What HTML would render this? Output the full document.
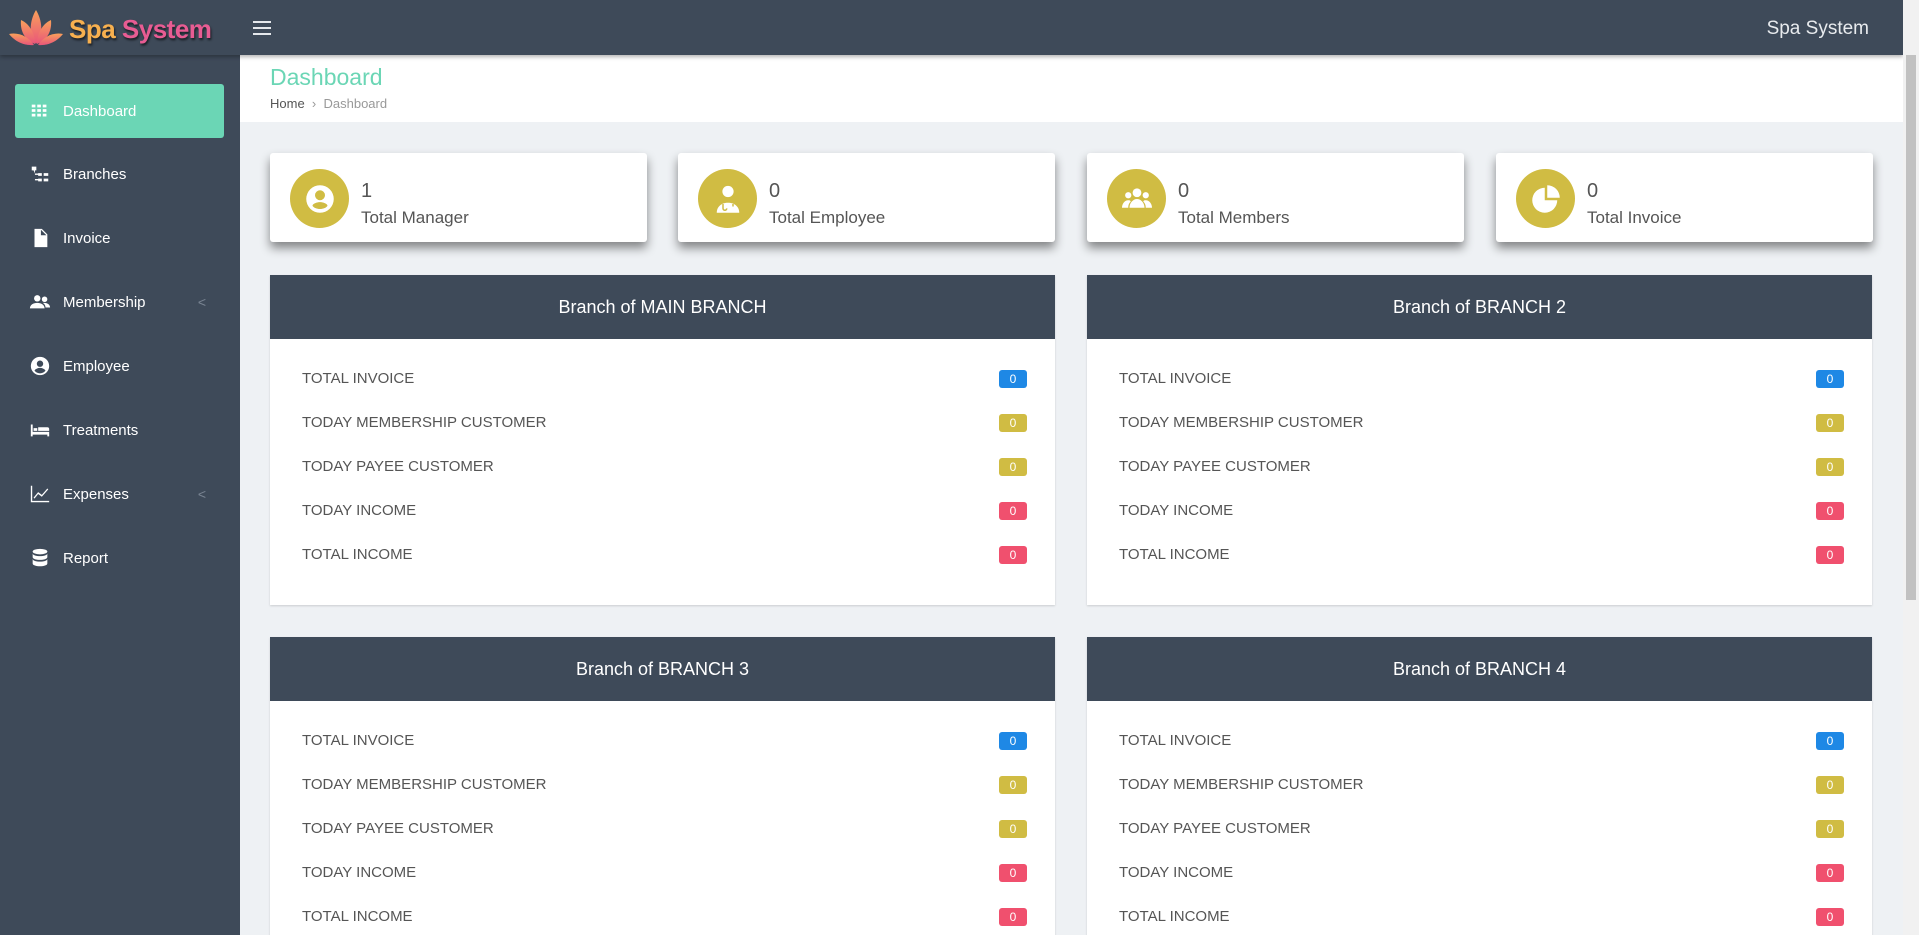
<!DOCTYPE html>
<html style="width:1919px;height:935px;overflow:hidden"><head><meta charset="utf-8"><style>
*{box-sizing:border-box;margin:0;padding:0}
body{width:1919px;height:935px;overflow:hidden;background:#eef1f4;font-family:"Liberation Sans",sans-serif;position:relative}
.top{position:absolute;left:0;top:0;width:1903px;height:55px;background:#3e4a59;box-shadow:0 2px 4px rgba(0,0,0,.3);z-index:3}
.logo{position:absolute;left:8px;top:8px}
.brand{position:absolute;left:69px;top:14px;font-size:26px;font-weight:bold;letter-spacing:-.5px;text-shadow:1px 2px 2px rgba(0,0,0,.6)}
.ham{position:absolute;left:253px;top:21px;width:18px}
.ham i{display:block;height:2px;background:#e5e8ec;margin-bottom:4px}
.tr{position:absolute;right:34px;top:18px;color:#e8ebee;font-size:19px}
.side{position:absolute;left:0;top:55px;width:240px;height:880px;background:#3e4a59}
.item{position:absolute;left:15px;width:209px;height:54px;color:#fff;font-size:15px;display:flex;align-items:center;padding-left:14px}
.item.act{background:#6bd6b5;border-radius:3px}
.item svg{width:22px;height:22px;margin-right:12px;fill:#fff}
.chev{position:absolute;right:18px;color:#7a8593;font-size:14px}
.hdr{position:absolute;left:240px;top:55px;width:1663px;height:67px;background:#fff}
.hdr h1{position:absolute;left:30px;top:9px;font-weight:normal;color:#6bd6b5;font-size:23px}
.bc{position:absolute;left:30px;top:41px;font-size:13px;color:#555}
.bc span{color:#999}
.scroll{position:absolute;right:0;top:0;width:16px;height:935px;background:#f1f1f1}
.scroll i{position:absolute;left:3px;top:55px;width:10px;height:545px;background:#c1c1c1}
.card{position:absolute;top:153px;width:377px;height:89px;background:#fff;border-radius:3px;box-shadow:0 6px 10px rgba(0,0,0,.45)}
.circ{position:absolute;left:20px;top:16px;width:59px;height:59px;border-radius:50%;background:#d0bc43;display:flex;align-items:center;justify-content:center}
.circ svg{width:30px;height:30px;fill:#fff}
.num{position:absolute;left:91px;top:27px;font-size:20px;color:#555}
.lab{position:absolute;left:91px;top:55px;font-size:17px;color:#555}
.wrap{position:absolute;left:0;top:0;width:1903px;height:935px;overflow:hidden}
.panel{position:absolute;width:785px;height:330px;background:#fff;box-shadow:0 1px 2px rgba(0,0,0,.15)}
.ph{height:64px;background:#3e4a59;color:#fff;font-size:18px;text-align:center;line-height:64px}
.row{position:absolute;left:32px;right:28px;font-size:15px;color:#555;height:20px}
.b{position:absolute;right:0;top:0;width:28px;height:18px;border-radius:3px;color:#fff;font-size:12px;text-align:center;line-height:18px}
.bl{background:#1e88e5}.y{background:#d0bc43}.r{background:#f0506e}
</style></head><body>
<div class="wrap">
<div class="top">
<svg class="logo" width="56" height="40" viewBox="0 0 56 40"><defs><linearGradient id="g" x1="0" y1="0" x2="0" y2="1"><stop offset="0" stop-color="#f9a15a"/><stop offset="1" stop-color="#e9557a"/></linearGradient></defs>
<path d="M28 36C20 26 22 12 28 2 34 12 36 26 28 36Z" fill="url(#g)"/><path d="M27 36C16 32 12 22 13 12 22 16 27 26 27 36Z" fill="url(#g)"/><path d="M29 36C40 32 44 22 43 12 34 16 29 26 29 36Z" fill="url(#g)"/><path d="M26 37C14 38 6 32 1 26 10 24 20 28 26 37Z" fill="url(#g)"/><path d="M30 37C42 38 50 32 55 26 46 24 36 28 30 37Z" fill="url(#g)"/></svg>
<div class="brand"><span style="color:#f7b04f">Spa</span> <span style="color:#e85c93">System</span></div>
<div class="ham"><i></i><i></i><i></i></div>
<div class="tr">Spa System</div>
</div>
<div class="side">
<div class="item act" style="top:29px"><svg viewBox="0 0 24 24"><path d="M3 5h4v3H3zM9 5h4v3H9zM15 5h4v3h-4zM3 10h4v3H3zM9 10h4v3H9zM15 10h4v3h-4zM3 15h4v3H3zM9 15h4v3H9zM15 15h4v3h-4z"/></svg>Dashboard</div>
<div class="item" style="top:92px"><svg viewBox="0 0 24 24"><path d="M3 4h5v4H3zM10 11h4v3h-4zM10 17h4v3h-4zM16 11h5v3h-5zM16 17h5v3h-5zM5 8h1.5v11H10v-1.5H6.5V13H10v-1.5H6.5z"/></svg>Branches</div>
<div class="item" style="top:156px"><svg viewBox="0 0 24 24"><path d="M6 2h8l6 6v14H6zM13 3v6h6zM8 13h10v1.5H8zM8 17h10v1.5H8z"/></svg>Invoice</div>
<div class="item" style="top:220px"><svg viewBox="0 0 24 24"><circle cx="9" cy="8" r="3.5"/><circle cx="17" cy="9" r="3"/><path d="M1 19c0-4 4-6 8-6s8 2 8 6zM17 13c3 0 6 2 6 5h-5c0-2-1-4-3-5z"/></svg>Membership<span class="chev">&lt;</span></div>
<div class="item" style="top:284px"><svg viewBox="0 0 24 24"><path d="M12 2a10 10 0 100 20 10 10 0 000-20zm0 4a3.5 3.5 0 110 7 3.5 3.5 0 010-7zm0 14a8 8 0 01-6-3c1-2 4-3 6-3s5 1 6 3a8 8 0 01-6 3z"/></svg>Employee</div>
<div class="item" style="top:348px"><svg viewBox="0 0 24 24"><path d="M2 6h2v8h18v5h-2v-2H4v2H2zM5 10h4v3H5zM10 9h10a2 2 0 012 2v2H10z"/></svg>Treatments</div>
<div class="item" style="top:412px"><svg viewBox="0 0 24 24"><path d="M2 3h1.5v16.5H22V21H2zM5 16l5-6 4 3 6-7 1 1-7 8-4-3-4 5z"/></svg>Expenses<span class="chev">&lt;</span></div>
<div class="item" style="top:476px"><svg viewBox="0 0 24 24"><ellipse cx="12" cy="5" rx="8" ry="3"/><path d="M4 7c0 2 4 3 8 3s8-1 8-3v4c0 2-4 3-8 3s-8-1-8-3zM4 13c0 2 4 3 8 3s8-1 8-3v5c0 2-4 3-8 3s-8-1-8-3z"/></svg>Report</div>
</div>
<div class="hdr"><h1>Dashboard</h1><div class="bc">Home &nbsp;<span>›</span>&nbsp; <span>Dashboard</span></div></div>
<div class="card" style="left:270px"><div class="circ"><svg viewBox="0 0 24 24"><path d="M12 1a11 11 0 100 22 11 11 0 000-22zm0 4a4 4 0 110 8 4 4 0 010-8zm0 15c-2.5 0-5-1-6-2.5 0-2 4-3 6-3s6 1 6 3c-1 1.5-3.5 2.5-6 2.5z"/></svg></div><div class="num">1</div><div class="lab">Total Manager</div></div>
<div class="card" style="left:678px"><div class="circ"><svg viewBox="0 0 24 24"><circle cx="12" cy="6" r="4.5"/><path d="M3 23c0-5 4-8 9-8s9 3 9 8z"/><path d="M8 16v3.5a1.5 1.5 0 003 0M16 16v2" stroke="#d0bc43" stroke-width="1.2" fill="none"/></svg></div><div class="num">0</div><div class="lab">Total Employee</div></div>
<div class="card" style="left:1087px"><div class="circ"><svg viewBox="0 0 24 24"><circle cx="12" cy="7" r="3.5"/><circle cx="5" cy="9" r="2.5"/><circle cx="19" cy="9" r="2.5"/><path d="M6 19c0-4 3-7 6-7s6 3 6 7zM0 19c0-3 2-6 5-6 1 0 1.5 0 2 1-1.5 1.5-2 3-2 5zM24 19c0-3-2-6-5-6-1 0-1.5 0-2 1 1.5 1.5 2 3 2 5z"/></svg></div><div class="num">0</div><div class="lab">Total Members</div></div>
<div class="card" style="left:1496px"><div class="circ"><svg viewBox="0 0 24 24"><path d="M11 3a10 10 0 1010 10H11zM13 1v10h10A10 10 0 0013 1z"/></svg></div><div class="num">0</div><div class="lab">Total Invoice</div></div>

<div class="panel" style="left:270px;top:275px"><div class="ph">Branch of MAIN BRANCH</div>
<div class="row" style="top:95px">TOTAL INVOICE<span class="b bl">0</span></div>
<div class="row" style="top:139px">TODAY MEMBERSHIP CUSTOMER<span class="b y">0</span></div>
<div class="row" style="top:183px">TODAY PAYEE CUSTOMER<span class="b y">0</span></div>
<div class="row" style="top:227px">TODAY INCOME<span class="b r">0</span></div>
<div class="row" style="top:271px">TOTAL INCOME<span class="b r">0</span></div></div>
<div class="panel" style="left:1087px;top:275px"><div class="ph">Branch of BRANCH 2</div>
<div class="row" style="top:95px">TOTAL INVOICE<span class="b bl">0</span></div>
<div class="row" style="top:139px">TODAY MEMBERSHIP CUSTOMER<span class="b y">0</span></div>
<div class="row" style="top:183px">TODAY PAYEE CUSTOMER<span class="b y">0</span></div>
<div class="row" style="top:227px">TODAY INCOME<span class="b r">0</span></div>
<div class="row" style="top:271px">TOTAL INCOME<span class="b r">0</span></div></div>
<div class="panel" style="left:270px;top:637px"><div class="ph">Branch of BRANCH 3</div>
<div class="row" style="top:95px">TOTAL INVOICE<span class="b bl">0</span></div>
<div class="row" style="top:139px">TODAY MEMBERSHIP CUSTOMER<span class="b y">0</span></div>
<div class="row" style="top:183px">TODAY PAYEE CUSTOMER<span class="b y">0</span></div>
<div class="row" style="top:227px">TODAY INCOME<span class="b r">0</span></div>
<div class="row" style="top:271px">TOTAL INCOME<span class="b r">0</span></div></div>
<div class="panel" style="left:1087px;top:637px"><div class="ph">Branch of BRANCH 4</div>
<div class="row" style="top:95px">TOTAL INVOICE<span class="b bl">0</span></div>
<div class="row" style="top:139px">TODAY MEMBERSHIP CUSTOMER<span class="b y">0</span></div>
<div class="row" style="top:183px">TODAY PAYEE CUSTOMER<span class="b y">0</span></div>
<div class="row" style="top:227px">TODAY INCOME<span class="b r">0</span></div>
<div class="row" style="top:271px">TOTAL INCOME<span class="b r">0</span></div></div>
</div>
<div class="scroll"><i></i></div>
</body></html>
